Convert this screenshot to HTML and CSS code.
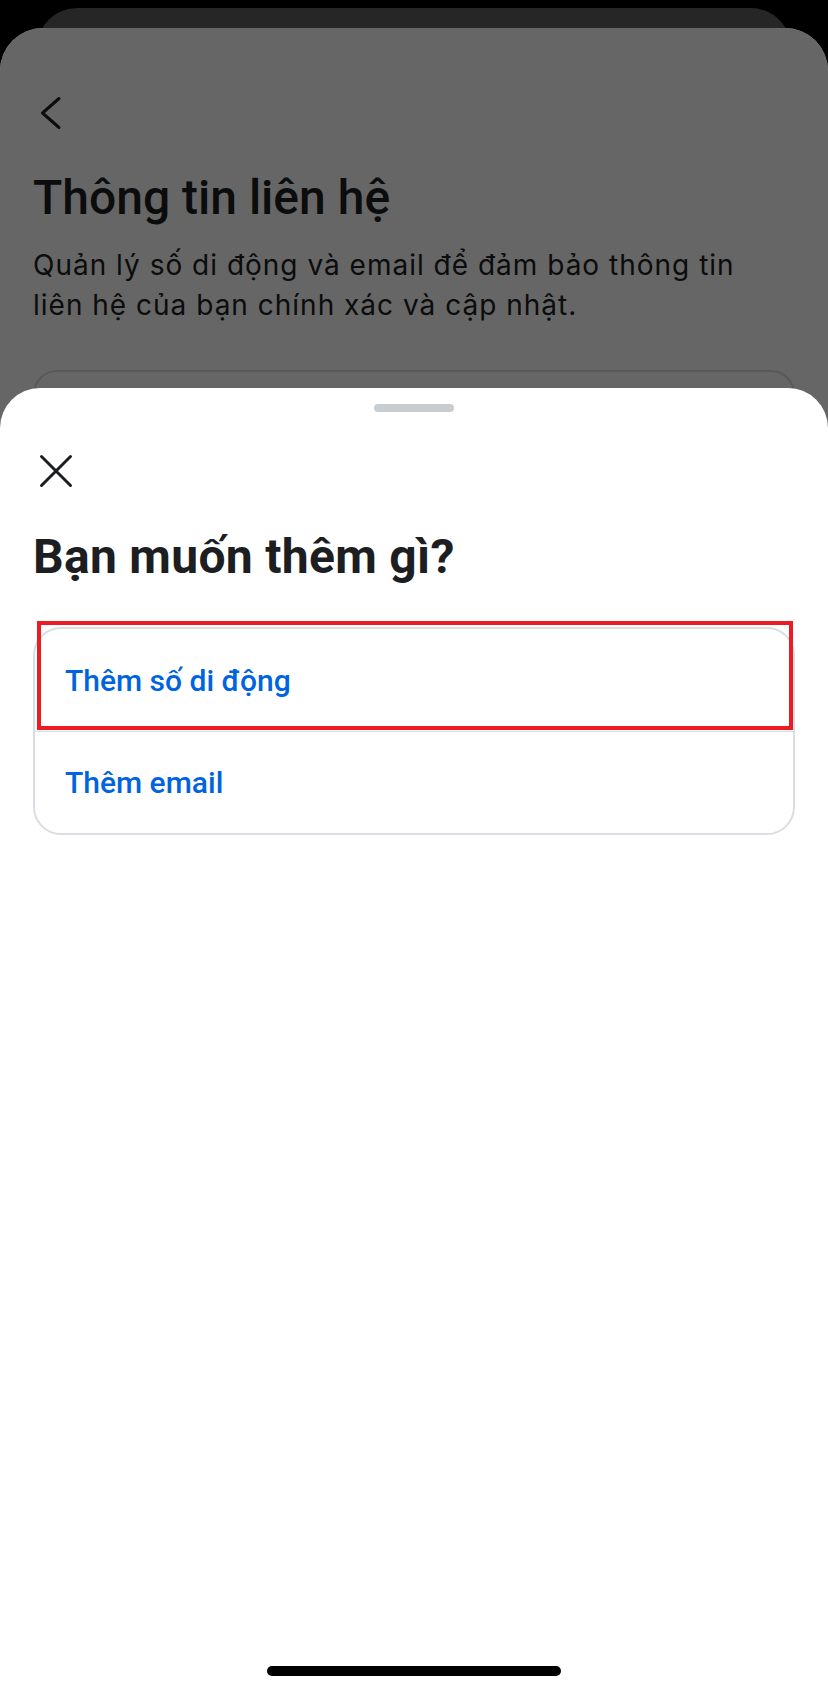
FILE: index.html
```html
<!DOCTYPE html>
<html lang="vi">
<head>
<meta charset="utf-8">
<title>Thông tin liên hệ</title>
<link rel="stylesheet" href="styles.css">
</head>
<body>
<div class="screen">
  <div class="back-card"></div>
  <div class="page">
    <div class="page-body">
      <div class="nav">
        <svg class="chevron" width="22" height="34" viewBox="0 0 22 34" aria-hidden="true">
          <polyline points="19,2.5 2.5,17 19,31.5" fill="none" stroke="#1c1e21" stroke-width="3" stroke-linecap="round" stroke-linejoin="round"/>
        </svg>
      </div>
      <h1 class="title">Thông tin liên hệ</h1>
      <p class="subtitle">Quản lý số di động và email để đảm bảo thông tin liên hệ của bạn chính xác và cập nhật.</p>
      <div class="bg-card"></div>
    </div>
    <div class="scrim"></div>
  </div>

  <div class="sheet">
    <div class="handle"></div>
    <div class="sheet-body">
      <button class="close" aria-label="Đóng">
        <svg width="34" height="34" viewBox="0 0 34 34" aria-hidden="true">
          <path d="M2.5 2.5 L31.5 31.5 M31.5 2.5 L2.5 31.5" fill="none" stroke="#1c1e21" stroke-width="3" stroke-linecap="round"/>
        </svg>
      </button>
      <h2 class="heading">Bạn muốn thêm gì?</h2>
      <div class="options">
        <div class="option">Thêm số di động</div>
        <div class="option">Thêm email</div>
        <div class="highlight"></div>
      </div>
    </div>
    <div class="home-indicator"></div>
  </div>
</div>
</body>
</html>
```

FILE: styles.css
```css
* { box-sizing: border-box; }
html, body { margin: 0; padding: 0; }
body {
  background: #000;
  font-family: Roboto, "Noto Sans", "Liberation Sans", sans-serif;
  color: #1c1e21;
  width: 828px;
  height: 1692px;
  overflow: hidden;
}
.screen {
  position: relative;
  width: 828px;
  height: 1692px;
  padding-top: 28px;
}
.back-card {
  position: absolute;
  top: 8px;
  left: 37px;
  right: 37px;
  height: 100px;
  background: #262626;
  border-radius: 40px 40px 0 0;
}
.page {
  position: relative;
  height: 1664px;
  background: #fff;
  border-radius: 43px 43px 0 0;
  overflow: hidden;
}
.page-body {
  padding: 68px 33px 0 33px;
}
.nav {
  height: 34px;
  padding-left: 7px;
}
.chevron { display: block; }
.title {
  margin: 40px 0 0 0;
  font-size: 48px;
  line-height: 56px;
  font-weight: 500;
  letter-spacing: 0;
}
.subtitle {
  margin: 19px 0 0 0;
  padding-right: 30px;
  font-family: Inter, Roboto, "Noto Sans", sans-serif;
  font-size: 28px;
  line-height: 40px;
  font-weight: 400;
  letter-spacing: 1px;
}
.bg-card {
  margin-top: 45px;
  height: 200px;
  border: 2px solid #dadde1;
  border-radius: 24px;
}
.scrim {
  position: absolute;
  inset: 0;
  background: rgba(0, 0, 0, 0.6);
}
.sheet {
  position: absolute;
  top: 388px;
  left: 0;
  right: 0;
  bottom: 0;
  background: #fff;
  border-radius: 40px 40px 0 0;
  display: flex;
  flex-direction: column;
}
.handle {
  width: 80px;
  height: 8px;
  border-radius: 4px;
  background: #c9ccd1;
  margin: 16px auto 0 auto;
}
.sheet-body {
  flex: 1;
  padding: 0 33px;
}
.close {
  display: block;
  margin: 42px 0 0 6px;
  padding: 0;
  border: 0;
  background: none;
  width: 34px;
  height: 34px;
}
.close svg { display: block; }
.heading {
  margin: 41px 0 0 0;
  font-size: 48px;
  line-height: 56px;
  font-weight: 700;
  letter-spacing: 0.3px;
}
.options {
  position: relative;
  margin-top: 42px;
  border: 2px solid #dadde1;
  border-radius: 28px;
}
.option {
  height: 102px;
  display: flex;
  align-items: center;
  padding-left: 30px;
  font-size: 30px;
  font-weight: 500;
  color: #0064e0;
}
.option + .option {
  border-top: 1px solid #dadde1;
}
.highlight {
  position: absolute;
  top: -8px;
  left: 2px;
  right: 0;
  height: 109px;
  border: 4px solid #ed1c24;
}
.home-indicator {
  width: 294px;
  height: 10px;
  border-radius: 5px;
  background: #000;
  margin: 0 auto 16px auto;
}
```
